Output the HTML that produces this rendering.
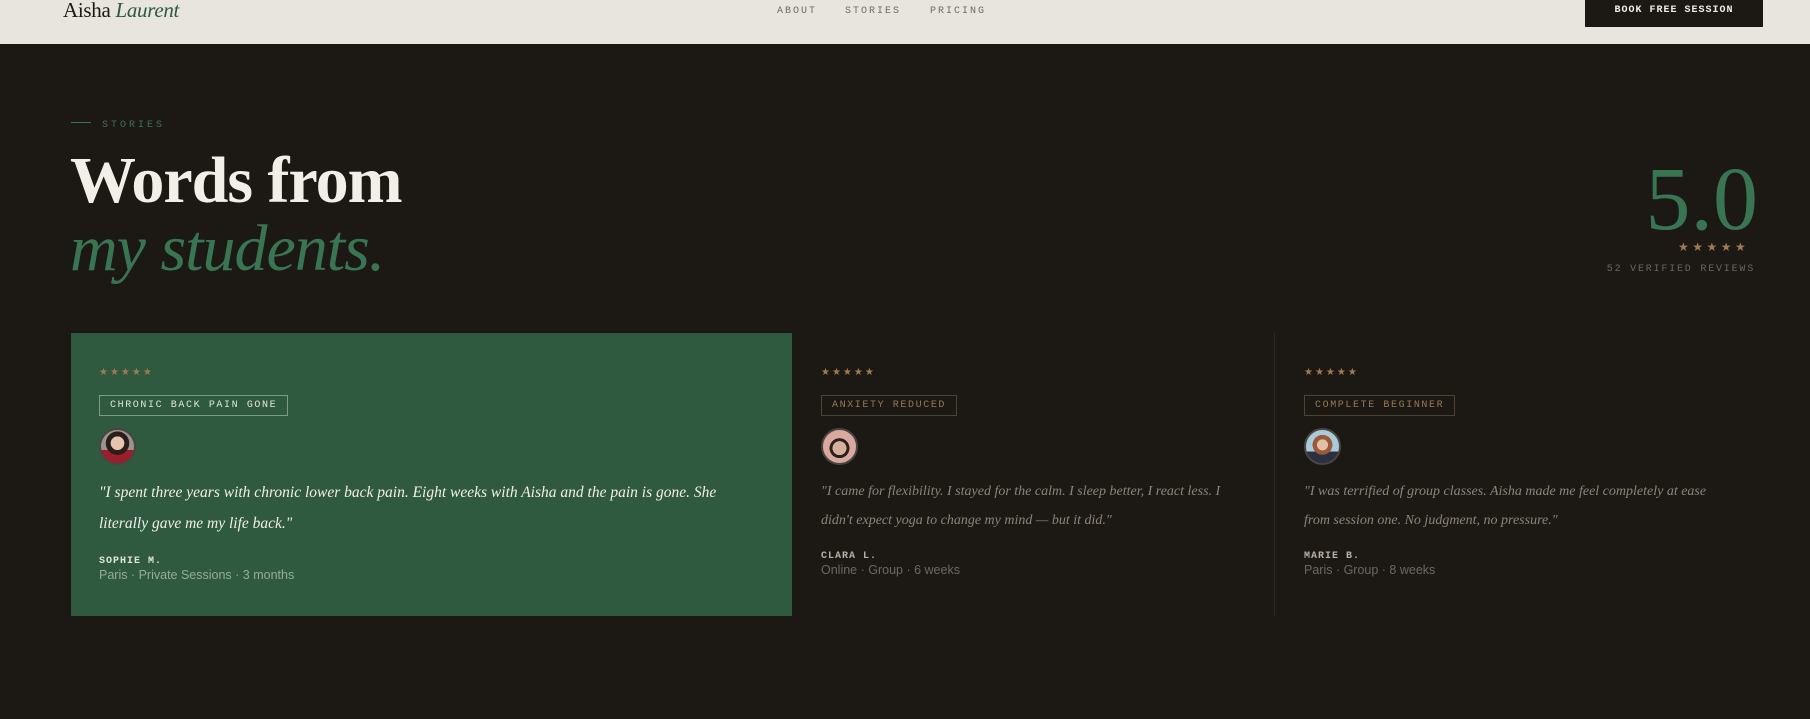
<!DOCTYPE html>
<html><head><meta charset="utf-8"><style>
*{margin:0;padding:0;box-sizing:border-box}
body{width:1810px;height:719px;background:#1c1915;overflow:hidden;font-family:"Liberation Sans",sans-serif;position:relative}
.hdr{position:absolute;left:0;top:0;width:1810px;height:44px;background:#e8e4de}
.logo{position:absolute;left:63px;top:-2px;font-family:"Liberation Serif",serif;font-size:21px;color:#1c1915;letter-spacing:-0.3px}
.logo i{color:#2f5a40}
.nav{position:absolute;top:6px;font-family:"Liberation Mono",monospace;font-size:10px;letter-spacing:2px;color:#6e6a64}
.btn{position:absolute;left:1585px;top:0;width:178px;height:27px;background:#1c1915;color:#f0ece6;font-family:"Liberation Mono",monospace;font-weight:bold;font-size:10px;letter-spacing:1px;text-align:center;line-height:22px}
.eyebrow{position:absolute;left:71px;top:120px;font-family:"Liberation Mono",monospace;font-size:10px;letter-spacing:3px;color:#3a7553}
.eyebrow:before{content:"";display:inline-block;width:20px;height:1px;background:#3a7553;vertical-align:middle;margin-right:11px;position:relative;top:-2px}
h1{position:absolute;left:70px;top:147px;font-family:"Liberation Serif",serif;font-weight:bold;font-size:66px;line-height:68px;color:#f2eee8;letter-spacing:-1px}
h1 i{color:#3a7553;font-weight:normal;display:block}
.big{position:absolute;right:52px;top:150px;font-family:"Liberation Serif",serif;font-size:90px;color:#3a7553;line-height:100px}
.bstars{position:absolute;left:1678px;top:240px;color:#a07a50;font-size:12px;letter-spacing:3.5px}
.rev{position:absolute;right:55px;top:264px;font-family:"Liberation Mono",monospace;font-size:10px;letter-spacing:1.8px;color:#6e6458}
.card{position:absolute;top:333px;height:283px;padding-left:28px}
.c1{left:71px;width:721px;background:#2f5a40}
.c2{left:792px;width:482px;padding-left:29px}
.c3{left:1274px;width:482px;padding-left:29px;border-left:1px solid #2c2823}
.stars{position:absolute;top:34px;font-size:10px;letter-spacing:2px;color:#a07a50}
.tag{position:absolute;top:62px;height:21px;padding:0 10px;font-family:"Liberation Mono",monospace;font-size:10px;letter-spacing:1.6px;line-height:19px}
.c1 .tag{border:1px solid #7f9c86;color:#dfe5dd}
.c2 .tag,.c3 .tag{border:1px solid #4e4233;color:#9a7850}
.av{position:absolute;top:95px;width:37px;height:37px;border-radius:50%;border:2px solid #4a4540;overflow:hidden}
.q{position:absolute;top:144px;font-family:"Liberation Serif",serif;font-style:italic;font-size:15.5px;line-height:31px;white-space:nowrap}
.c1 .q{color:#f2eee8}
.c2 .q,.c3 .q{color:#8c8478;top:144px;line-height:29px;font-size:14px}
.nm{position:absolute;font-family:"Liberation Mono",monospace;font-size:10px;letter-spacing:1px;font-weight:bold}
.mt{position:absolute;font-size:12.5px}
.c1 .nm{top:223px;color:#dfe5dd}.c1 .mt{top:235px;color:#97ab9b}
.c2 .nm,.c3 .nm{top:218px;color:#b8b0a4}.c2 .mt,.c3 .mt{top:230px;color:#6e675e}
</style></head><body>
<div class="hdr">
<div class="logo">Aisha <i>Laurent</i></div>
<div class="nav" style="left:777px">ABOUT</div>
<div class="nav" style="left:845px">STORIES</div>
<div class="nav" style="left:930px">PRICING</div>
<div class="btn">BOOK FREE SESSION</div>
</div>
<div class="eyebrow">STORIES</div>
<h1>Words from<i>my students.</i></h1>
<div class="big">5.0</div>
<div class="bstars">★★★★★</div>
<div class="rev">52 VERIFIED REVIEWS</div>

<div class="card c1">
<div class="stars">★★★★★</div>
<div class="tag">CHRONIC BACK PAIN GONE</div>
<div class="av" style="background:radial-gradient(circle at 50% 40%,#e7c4ae 0 26%,#2a1e1a 27% 45%,transparent 46%),linear-gradient(#9a948e 0 60%,#9b1e2a 61%)"></div>
<div class="q">"I spent three years with chronic lower back pain. Eight weeks with Aisha and the pain is gone. She<br>literally gave me my life back."</div>
<div class="nm">SOPHIE M.</div>
<div class="mt">Paris · Private Sessions · 3 months</div>
</div>
<div class="card c2">
<div class="stars">★★★★★</div>
<div class="tag">ANXIETY REDUCED</div>
<div class="av" style="background:radial-gradient(circle at 50% 55%,#d6b09a 0 28%,#2a201c 29% 40%,transparent 41%),#d9a89e"></div>
<div class="q">"I came for flexibility. I stayed for the calm. I sleep better, I react less. I<br>didn't expect yoga to change my mind — but it did."</div>
<div class="nm">CLARA L.</div>
<div class="mt">Online · Group · 6 weeks</div>
</div>
<div class="card c3">
<div class="stars">★★★★★</div>
<div class="tag">COMPLETE BEGINNER</div>
<div class="av" style="background:radial-gradient(circle at 50% 45%,#e4c0a8 0 22%,#9a5a3a 23% 40%,transparent 41%),linear-gradient(#a9cbd8 0 65%,#2a3040 66%)"></div>
<div class="q">"I was terrified of group classes. Aisha made me feel completely at ease<br>from session one. No judgment, no pressure."</div>
<div class="nm">MARIE B.</div>
<div class="mt">Paris · Group · 8 weeks</div>
</div>
</body></html>
